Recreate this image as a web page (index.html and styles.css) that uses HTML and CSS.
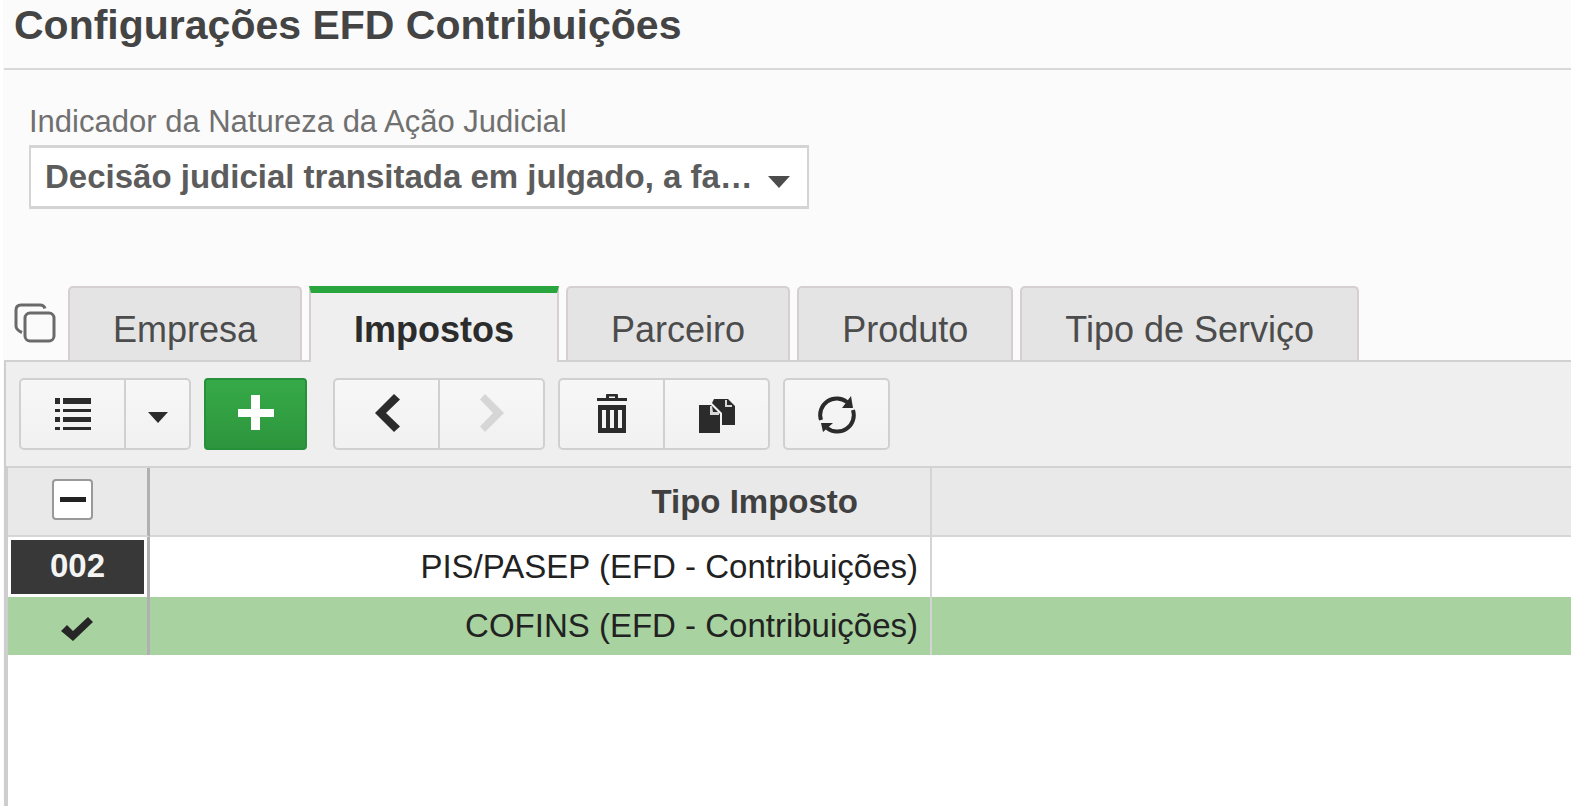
FILE: index.html
```html
<!DOCTYPE html>
<html lang="pt-BR">
<head>
<meta charset="utf-8">
<title>Configurações EFD Contribuições</title>
<link rel="stylesheet" href="styles.css">
</head>
<body>
<main class="page">
  <header class="page-header">
    <h1 class="page-title">Configurações EFD Contribuições</h1>
  </header>

  <section class="filters">
    <label class="field-label" for="natureza">Indicador da Natureza da Ação Judicial</label>
    <div class="select-wrap">
      <select class="select" id="natureza">
        <option>Decisão judicial transitada em julgado, a fa…</option>
      </select>
      <svg class="select-arrow" viewBox="0 0 24 14" aria-hidden="true"><path d="M1 1h22L12 13z"/></svg>
    </div>
  </section>

  <div class="tab-bar">
    <button class="stack-button" type="button" aria-label="Abas">
      <svg class="stack-icon" viewBox="0 0 42 40" aria-hidden="true">
        <path d="M31 5.500Q30 2 26 2H7Q2 2 2 7V23Q2 27 8 29.500"/>
        <rect x="11" y="10" width="29" height="28" rx="5"/>
      </svg>
    </button>
    <nav class="tabs" role="tablist">
      <button class="tab" type="button" role="tab">Empresa</button>
      <button class="tab tab-active" type="button" role="tab" aria-selected="true">Impostos</button>
      <button class="tab" type="button" role="tab">Parceiro</button>
      <button class="tab" type="button" role="tab">Produto</button>
      <button class="tab" type="button" role="tab">Tipo de Serviço</button>
    </nav>
  </div>

  <section class="panel">
    <div class="toolbar" role="toolbar">
      <div class="group">
        <button class="tool" type="button" aria-label="Lista">
          <svg class="icon" viewBox="0 0 40 40" aria-hidden="true">
            <path d="M2 4h5v6H2zM10 4h28v6H10zM2 15h5v3H2zM10 15h28v3H10zM2 23h5v5H2zM10 23h28v5H10zM2 33h5v3H2zM10 33h28v3H10z"/>
          </svg>
        </button>
        <button class="tool tool-narrow" type="button" aria-label="Opções de lista">
          <svg class="icon" viewBox="0 0 40 40" aria-hidden="true"><path d="M10 18h20L20 29z"/></svg>
        </button>
      </div>
      <button class="tool tool-add" type="button" aria-label="Adicionar">
        <svg class="icon" viewBox="0 0 40 40" aria-hidden="true"><path d="M15 1h9v14h14v8H24v13h-9V23H2v-8h13z"/></svg>
      </button>
      <div class="group group-nav">
        <button class="tool" type="button" aria-label="Anterior">
          <svg class="icon" viewBox="0 0 40 40" aria-hidden="true"><path d="M8 19L27 0l6 5.500L19 19l14 13.500L27 38z"/></svg>
        </button>
        <button class="tool" type="button" aria-label="Próximo" disabled>
          <svg class="icon" viewBox="0 0 40 40" aria-hidden="true"><path d="M32 19L13 0l-5 5.500L21 19L8 32.500L13 38z"/></svg>
        </button>
      </div>
      <div class="group">
        <button class="tool" type="button" aria-label="Excluir">
          <svg class="icon" viewBox="0 0 40 40" aria-hidden="true">
            <path d="M5 4h9V1q0-1 1-1h10q1 0 1 1v3h9v3H5zM17 4h6V2.500h-6z" fill-rule="evenodd"/>
            <path d="M6 11h28v28H6zM10 16v18h4V16zM18 16v18h4V16zM26 16v18h4V16z" fill-rule="evenodd"/>
          </svg>
        </button>
        <button class="tool" type="button" aria-label="Duplicar">
          <svg class="icon" viewBox="0 0 40 40" aria-hidden="true">
            <path d="M17 5h14l7 7v19H25V19L15 9z"/>
            <path class="fold" d="M28 6v7h7v-2h-5V6z"/>
            <path d="M2 11h12l9 9v19H2z"/>
            <path class="fold" d="M13 12v9h9v-3h-6l-1-6z"/>
          </svg>
        </button>
      </div>
      <div class="group">
        <button class="tool" type="button" aria-label="Atualizar">
          <svg class="icon" viewBox="0 0 40 40" aria-hidden="true">
            <path class="line" d="M4 26A16.500 16.500 0 0 1 30 8M36 16A16.500 16.500 0 0 1 10 34"/>
            <path d="M34 2l2 12H25zM4 29h12L6 38z"/>
          </svg>
        </button>
      </div>
    </div>

    <div class="grid">
      <table class="table">
        <colgroup><col class="col-mark"><col class="col-type"><col></colgroup>
        <thead>
          <tr>
            <th class="mark"><input class="check-all" type="checkbox" aria-label="Selecionar todos"></th>
            <th class="type" scope="col">Tipo Imposto</th>
            <th></th>
          </tr>
        </thead>
        <tbody>
          <tr>
            <td class="mark"><span class="counter">002</span></td>
            <td class="type">PIS/PASEP (EFD - Contribuições)</td>
            <td></td>
          </tr>
          <tr class="selected">
            <td class="mark">
              <svg class="tick" viewBox="0 0 34 26" aria-hidden="true"><path d="M1 15l6-6 6 6L28 1l5 5-20 19z"/></svg>
            </td>
            <td class="type">COFINS (EFD - Contribuições)</td>
            <td></td>
          </tr>
        </tbody>
      </table>
    </div>
  </section>
</main>
</body>
</html>
```
FILE: styles.css
```css
* {
  box-sizing: border-box;
}

body {
  margin: 0;
  background: #fff;
  color: #333;
  font-family: "Liberation Sans", Arial, sans-serif;
}

button,
select {
  font-family: inherit;
}

.page {
  display: flex;
  flex-direction: column;
  min-height: 100vh;
  margin-left: 3px;
  padding-left: 1px;
  background: #fbfbfb;
}

.page-header {
  padding: 1px 10px 19px;
  border-bottom: 2px solid #d8d8d8;
}

.page-title {
  margin: 0;
  color: #444;
  font-size: 41px;
  line-height: 48px;
}

.filters {
  padding: 34px 25px 77px;
}

.field-label {
  display: block;
  margin-bottom: 5px;
  color: #707070;
  font-size: 31px;
  line-height: 36px;
}

.select-wrap {
  position: relative;
  width: 780px;
  max-width: 100%;
}

.select {
  display: block;
  width: 100%;
  height: 64px;
  padding: 0 48px 2px 14px;
  border: 3px solid #d4d4d4;
  border-width: 3px 2px;
  border-radius: 0;
  background: #fff;
  color: #5c5c5c;
  font-size: 33px;
  font-weight: bold;
  appearance: none;
}

.select-arrow {
  position: absolute;
  top: 30px;
  right: 18px;
  width: 24px;
  height: 14px;
  fill: #4c4c4c;
  pointer-events: none;
}

/* Tabs */

.tab-bar {
  display: flex;
  align-items: flex-end;
}

.stack-button {
  width: 64px;
  padding: 0 0 17px 10px;
  border: 0;
  background: none;
}

.stack-icon {
  display: block;
  width: 42px;
  height: 40px;
  fill: none;
  stroke: #6a6a6a;
  stroke-width: 3;
}

.tabs {
  display: flex;
  gap: 7px;
}

.tab {
  padding: 22px 43px 10px;
  border: 2px solid #d5cfcf;
  border-bottom: 0;
  border-radius: 5px 5px 0 0;
  background: #e4e4e4;
  color: #4c4c4c;
  font-size: 36px;
  line-height: 40px;
}

.tab-active {
  position: relative;
  margin-bottom: -2px;
  padding: 17px 43px 12px;
  border-top: 7px solid #28a53c;
  border-radius: 0;
  background: #efefef;
  color: #2c2c2c;
  font-weight: bold;
}

.panel {
  display: flex;
  flex: 1;
  flex-direction: column;
  border-top: 2px solid #d2d0d0;
  border-left: 2px solid #cecece;
}

/* Toolbar */

.toolbar {
  display: flex;
  gap: 13px;
  padding: 16px 13px;
  background: #efefef;
}

.group {
  display: flex;
  border: 2px solid #d0d0d0;
  border-radius: 5px;
  background: linear-gradient(#f7f7f7, #f1f1f1);
}

.group-nav {
  margin-left: 13px;
}

.tool {
  display: flex;
  align-items: center;
  justify-content: center;
  width: 103px;
  height: 68px;
  padding: 0;
  border: 0;
  background: none;
}

.tool + .tool {
  width: 105px;
  border-left: 2px solid #d0d0d0;
}

.tool + .tool-narrow {
  width: 65px;
}

.tool-add {
  height: 72px;
  border: 2px solid #26903a;
  border-radius: 4px;
  background: linear-gradient(#36aa48, #2d953d);
}

.icon {
  width: 40px;
  height: 40px;
  fill: #2b2b2b;
}

.tool-add .icon {
  fill: #fff;
}

.tool:disabled .icon {
  fill: #d6d6d6;
}

.icon .fold {
  fill: #d8d8d8;
}

.icon .line {
  fill: none;
  stroke: #2b2b2b;
  stroke-width: 4;
}

/* Grid */

.grid {
  flex: 1;
  border-top: 2px solid #d2d2d2;
  border-left: 2px solid #cecece;
  background: #fff;
}

.table {
  width: 100%;
  border-collapse: separate;
  border-spacing: 0;
  table-layout: fixed;
  color: #222;
  font-size: 33px;
  line-height: 38px;
}

.col-mark {
  width: 142px;
}

.col-type {
  width: 782px;
}

.table th,
.table td {
  height: 60px;
  padding: 0;
}

.table th {
  height: 69px;
  border-bottom: 2px solid #d6d6d6;
  background: #e9e9e9;
  color: #404040;
}

.table .mark {
  padding: 0 3px;
  border-right: 3px solid #b0b0b0;
  text-align: center;
}

.table .type {
  padding-right: 12px;
  border-right: 2px solid #d4d4d4;
  text-align: right;
}

.table th.type {
  padding-right: 72px;
}

.check-all {
  display: block;
  width: 41px;
  height: 41px;
  margin: 0 auto 4px 41px;
  border: 2px solid #999;
  border-radius: 4px;
  background: linear-gradient(#222, #222) center / 26px 5px no-repeat #fff;
  appearance: none;
}

.counter {
  display: block;
  padding: 7px 0 9px;
  background: #383838;
  color: #f4f4f4;
  font-weight: bold;
}

.selected {
  background: #a8d29f;
}

.table .selected td {
  height: 58px;
}

.tick {
  display: block;
  width: 34px;
  height: 26px;
  margin: 6px auto 0 49px;
  fill: #262626;
}
```
